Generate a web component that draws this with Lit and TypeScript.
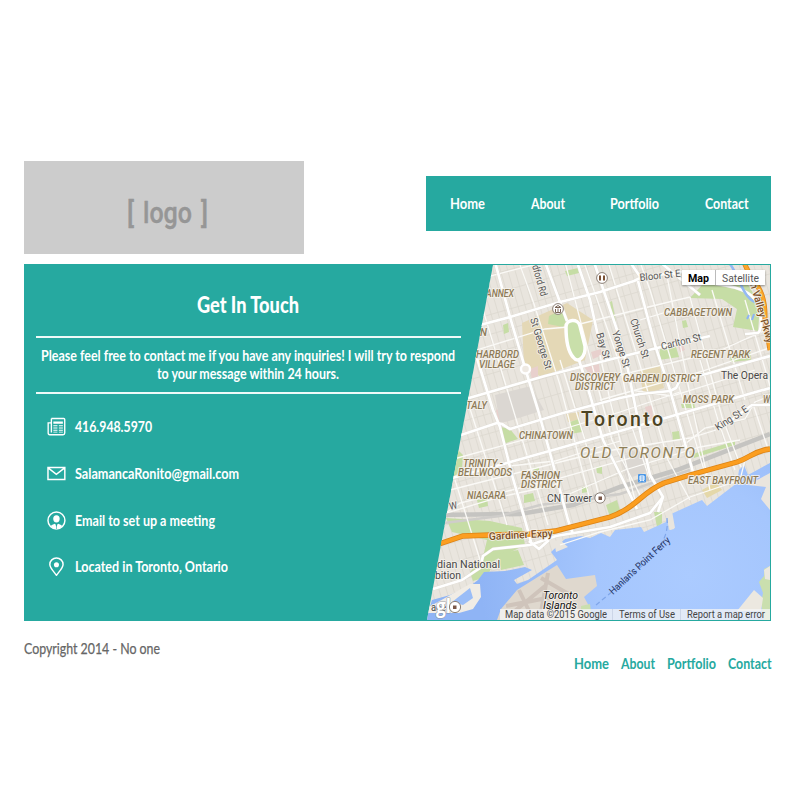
import { LitElement, html, svg, css } from "lit";
import { customElement } from "lit/decorators.js";

const fit = (text: string, w: number, h: number, base: number, cls = "") => html`
  <svg class="fit ${cls}" width=${w} height=${h} role="text">
    <text x="0" y=${base} textLength=${w} lengthAdjust="spacingAndGlyphs">${text}</text>
  </svg>`;

type Label = [text: string, x: number, y: number, w: number, cls: string, rot?: number];

const LABELS: Label[] = [
  ["ANNEX", 486, 297, 28, "area"],
  ["N", 480, 336, 7, "area"],
  ["HARBORD", 476, 358, 43, "area"],
  ["VILLAGE", 479, 368, 36, "area"],
  ["TALY", 466, 409, 21, "area"],
  ["DISCOVERY", 570, 381, 50, "area"],
  ["DISTRICT", 575, 390, 40, "area"],
  ["GARDEN DISTRICT", 623, 382, 78, "area"],
  ["CABBAGETOWN", 664, 316, 68, "area"],
  ["REGENT PARK", 691, 358, 59, "area"],
  ["MOSS PARK", 683, 403, 51, "area"],
  ["W", 763, 403, 7, "area"],
  ["CHINATOWN", 519, 439, 54, "area"],
  ["TRINITY -", 463, 467, 40, "area"],
  ["BELLWOODS", 458, 476, 54, "area"],
  ["FASHION", 521, 479, 39, "area"],
  ["DISTRICT", 521, 488, 41, "area"],
  ["NIAGARA", 467, 499, 39, "area"],
  ["EAST BAYFRONT", 688, 484, 70, "area"],
  ["OLD TORONTO", 580, 458, 115, "old"],
  ["Toronto", 581, 426, 82, "city"],
  ["The Opera", 721, 379, 47, "place"],
  ["CN Tower", 547, 502, 45, "place"],
  ["dian National", 437, 568, 63, "place"],
  ["bition", 435, 579, 26, "place"],
  ["ace", 431, 611, 15, "place"],
  ["Toronto", 543, 599, 35, "isle"],
  ["Islands", 543, 609, 34, "isle"],
  ["dford Rd", 532, 266, 32, "road", 74],
  ["St George St", 530, 319, 53, "road", 73],
  ["Bay St", 596, 334, 27, "road", 73],
  ["Yonge St", 612, 332, 38, "road", 72],
  ["Church St", 630, 320, 41, "road", 72],
  ["Carlton St", 662, 350, 41, "road", -14],
  ["Bloor St E", 640, 281, 41, "road", -6],
  ["King St E", 718, 431, 37, "road", -33],
  ["W", 450, 510, 8, "road", -12],
  ["Gardiner Expy", 489, 540, 64, "hwy", -3],
  ["n Valley Pkwy", 750, 284, 62, "hwy", 74],
  ["Hanlan's Point Ferry", 613, 595, 79, "ferry", -43],
];

const MINOR = [
  "M477 282L490 276L600 248", "M470 352L545 329L568 327L640 309L690 297", "M480 300L520 432L548 525", "M520 265L534 304L560 385L590 500",
  "M565 262L596 380L612 440L640 495", "M640 262L650 290L668 350L707 480", "M667 276L693 410L710 490", "M640 320L680 308L700 311",
  "M690 297L722 417L741 467", "M712 290L745 400", "M745 300L774 400", "M753 404L768 449", "M450 460L560 430L620 412L680 392",
  "M620 375L717 352L770 328", "M630 390L672 396L755 370", "M450 490L560 462L600 452L690 438L716 430", "M510 466L555 461L590 450L620 441",
  "M560 498L625 470L700 447L740 440", "M436 520L460 503L560 478L630 458", "M455 480L480 560", "M464 390L480 440L507 525",
  "M440 515L500 497L560 484", "M585 265L620 365L633 430L650 480", "M609 265L640 365L668 460L690 500", "M560 545L600 532L650 520L690 497L740 480L745 460",
  "M600 355L610 400L635 500", "M700 360L718 420L735 470", "M600 400L700 372L772 347", "M560 360L585 440L600 500", "M680 448L705 428L745 419L755 402L770 396",
];

const MAJOR = [
  "M465 329L510 317L560 302L600 292L634 281L642 277L681 272L710 275",
  "M495 262L510 317L525 368L538 410L550 453L568 520L573 534",
  "M473 345L493 410L500 427L512 475L525 520L531 542",
  "M545 262L567 321M579 360L590 395L603 440L622 478L637 509",
  "M577 262L590 300L600 345M594 262L617 330L628 370L640 430L650 475L663 497L658 512",
  "M638 281L655 345L670 390L693 472",
  "M630 262L641 278M660 262L700 295",
  "M462 400L545 376L620 357L657 348L710 336",
  "M455 437L497 423L502 424L510 429L563 413L620 398L640 394L670 391L676 388L680 380L706 374L770 356",
  "M445 480L507 463L553 450L620 431L700 408L770 388",
  "M718 430L752 405L772 405",
  "M433 589L462 580L480 568L483 556L493 549L530 545L556 536L610 527L650 513L663 497",
  "M700 281C722 285 740 286 752 296C762 306 763 330 758 333L745 334",
  "M529 541L539 549L549 540",
];

const GARDINER = "M436 545L463 536L490 535L530 534L555 531L610 517C636 508 642 492 664 483L690 475L737 462C750 458 753 451 770 449";

@customElement("city-map")
export class CityMap extends LitElement {
  static styles = css`
    :host { display: block; position: relative; width: 343px; height: 355px;
      clip-path: polygon(66px 0, 100% 0, 100% 100%, 0 100%); font-family: Roboto, sans-serif; }
    .art { display: block; }
    .art text { paint-order: stroke; stroke: #f5f2ec; stroke-width: 2px; stroke-linejoin: round; stroke-opacity: .85; }
    .minor { fill: none; stroke: #fbfaf7; stroke-width: 1.3; }
    .major { fill: none; stroke: #fff; stroke-width: 2.7; stroke-linejoin: round; }
    .edge { fill: none; stroke: #dedad2; stroke-width: 3.3; stroke-linejoin: round; }
    .area { font: italic 500 10px Roboto, sans-serif; fill: #8d7a56; }
    .old { font: italic 400 15.5px Roboto, sans-serif; fill: #8f8059; }
    .city { font: 500 19.5px Roboto, sans-serif; fill: #4c4322; }
    .place { font: 10.5px Roboto, sans-serif; fill: #484848; }
    .isle { font: italic 400 11px Roboto, sans-serif; fill: #111; }
    .road { font: 10.3px Roboto, sans-serif; fill: #555; }
    .hwy { font: 500 10.5px Roboto, sans-serif; fill: #7c4f24; }
    .art .ferry { font: 10px Roboto, sans-serif; fill: #223060; stroke: none; }
    .art .brand { font: 700 19px "Open Sans", sans-serif; fill: #fff; stroke: #8c9199; stroke-width: 1.2px; }
    .switch { position: absolute; top: 5px; right: 5px; display: flex; height: 15px; background: #fff;
      box-shadow: 0 1px 2px rgba(0,0,0,.4); color: #565656; }
    .opt { display: flex; align-items: center; justify-content: center; box-sizing: border-box; width: 49px; }
    .opt.on { width: 34px; padding-right: 1px; border-right: 1px solid #bbb; color: #000; }
    .fit { display: block; overflow: visible; fill: currentColor; font: 10.5px Roboto, sans-serif; }
    .fit.b { font-weight: 700; }
    .credits { position: absolute; right: 0; bottom: 0; display: flex; height: 11px; color: #444; }
    .credit { background: rgba(245,245,245,.76); padding: 0 5px 0 6px; border-left: 1px solid rgba(190,200,220,.6); }
    .credit:first-child { border-left: 0; padding-left: 5px; }
  `;

  private label([t, x, y, w, cls, rot]: Label) {
    return svg`<text class=${cls} x=${x} y=${y} textLength=${w}
      lengthAdjust=${cls === "city" || cls === "old" ? "spacing" : "spacingAndGlyphs"}
      transform=${rot ? `rotate(${rot} ${x} ${y})` : "rotate(0)"}>${t}</text>`;
  }

  render() {
    return html`
      <svg class="art" width="343" height="355" viewBox="427 265 343 355">
        <defs>
          <pattern id="blocks" width="14" height="19" patternUnits="userSpaceOnUse" patternTransform="rotate(-16)">
            <path d="M0 .5H14M.5 0V19M7.5 0V19" stroke="#dcd8cf" stroke-width=".8" fill="none" />
          </pattern>
          <radialGradient id="lake" gradientUnits="userSpaceOnUse" cx="690" cy="575" r="210">
            <stop offset="0" stop-color="#abcbff" /><stop offset=".45" stop-color="#a5c6fd" /><stop offset="1" stop-color="#8fb4f5" />
          </radialGradient>
        </defs>
        <rect x="427" y="265" width="343" height="355" fill="#e9e5de" />
        <rect x="427" y="265" width="343" height="355" fill="url(#blocks)" />
        <g fill="#e4d8b6">
          <path d="M522 323L567 303L593 320L585 360L541 377L524 365Z" />
          <path d="M640 370L660 366L664 388L643 395Z" /><path d="M566 414L579 412L579 420L568 422Z" />
        </g>
        <g fill="#e8d0cd">
          <path d="M530 369L538 366L538 378L532 380Z" /><path d="M591 352L601 349L602 355L593 359Z" /><path d="M584 367L599 364L600 374L590 374Z" />
          <path d="M496 410L504 407L507 421L499 423Z" /><path d="M645 407L652 405L653 418L648 420Z" /><path d="M678 346L683 345L685 350L680 352Z" />
        </g>
        <path fill="#dbd7d2" d="M495 395L531 386L544 410L509 421L500 423ZM620 457L640 450L652 470L627 479Z" />
        <g fill="#c6dda5">
          <path d="M690 298L703 284L743 276L760 305L758 331L733 327L737 309L722 299Z" />
          <path d="M660 349L676 347L679 357L659 360Z" /><path d="M501 427L510 429L518 439L503 444Z" />
          <path d="M570 422L579 419L582 432L570 434Z" /><path d="M565 271L578 268L579 273L567 276Z" />
          <path d="M549 316L561 310L567 320L563 327L548 324Z" /><path d="M503 325L508 323L509 332L504 334Z" />
          <path d="M612 301L616 322L613 320L610 302Z" /><path d="M672 432L679 431L680 439L673 440Z" />
          <path d="M693 454L735 441L735 445L694 458Z" /><path d="M458 450L463 455L462 469L453 478Z" />
          <path d="M477 500L487 497L488 506L479 508ZM524 495L533 493L535 501L524 503Z" />
          <path d="M533 468L539 467L539 472L534 473ZM596 467L602 466L602 474L597 473ZM582 487L588 487L588 492L582 493Z" />
          <path d="M682 321L686 320L688 327L683 328ZM681 404L694 402L695 408L682 408ZM730 357L750 350L751 360L731 362Z" />
          <path d="M446 518L490 521L522 528L525 545L495 560L487 577L473 581L470 572L483 557L487 540L452 532Z" />
          <path d="M498 554L518 550L524 565L501 570Z" />
          <path d="M606 505L617 500L621 514L610 517ZM654 512L662 512L662 523L657 527Z" />
        </g>
        <path d="M436 515L520 514L573 505L620 487L677 470L770 434" fill="none" stroke="#c5c4c1" stroke-width="4.5" />
        <path d="M436 524L500 516L540 505L620 494L690 470" fill="none" stroke="#cfcdca" stroke-width="2.5" />
        <path fill="url(#lake)" d="M425 622L432 600L450 595L470 586L478 580L484 572L505 571L525 567L532 570L514 580L517 584L528 580L557 560L551 552L565 539L581 536L590 538L601 533L610 537L615 530L641 527L644 532L666 522L667 517L669 530L674 529L671 514L702 500L707 506L737 483L739 470L744 465L748 475L770 463V622Z" />
        <path fill="#e9e5de" d="M748 485L759 479L770 473V510L761 499L766 487Z" />
        <path fill="#e5d8a9" d="M702 490L716 482L722 490L707 498Z" />
        <path fill="#e9e5de" d="M554 541L560 540L568 547L556 552ZM665 513L672 511L675 528L670 530Z" />
        <path fill="#f0ece5" d="M427 608L445 598L470 584L480 584L481 597L473 609L459 613L427 613Z" />
        <path fill="#9abdf7" d="M452 602L470 588L473 598L463 605Z" />
        <path fill="#dfd8ce" d="M497 620L501 609L517 590L557 565L566 579L595 575L597 586L584 597L590 608L588 620Z" />
        <path fill="none" stroke="#cfc4bb" stroke-width="4" d="M506 606L557 596M510 615L545 586M519 590L530 613M541 578L572 596M548 573L541 612" />
        <path fill="#cadfae" d="M581 606L590 604L591 612L581 611ZM759 582L764 576L764 569L770 566V620H764L761 603L763 593Z" />
        <path fill="#ece8e0" d="M737 611L754 590L763 598L761 611ZM764 570L770 566V580L765 579Z" />
        <path d="M667 518C670 545 650 560 596 605" fill="none" stroke="#7fa6ea" stroke-width="1.2" stroke-dasharray="5 3" />
        ${MINOR.map((d) => svg`<path class="minor" d=${d} />`)}
        ${MAJOR.map((d) => svg`<path class="edge" d=${d} />`)}
        ${MAJOR.map((d) => svg`<path class="major" d=${d} />`)}
        <path d="M566 327C566 319 578 318 580 326L585 346C586 355 579 365 573 357C567 350 566 338 566 327Z" fill="#c9dfaa" stroke="#fff" stroke-width="3.5" />
        <circle cx="525.5" cy="369" r="4.5" fill="#eee9e2" stroke="#fff" stroke-width="2.4" />
        <path d="M730 264C742 280 742 300 760 304" fill="none" stroke="#94b9f4" stroke-width="2.5" />
        <path d="M754 314L752 320M749 315L747 319" stroke="#8db3f5" stroke-width="2" />
        <path d="M744 262C752 285 766 285 765 320L770 350" fill="none" stroke="#dd8619" stroke-width="5" />
        <path d="M744 262C752 285 766 285 765 320L770 350" fill="none" stroke="#fba62c" stroke-width="3.4" />
        <path d=${GARDINER} fill="none" stroke="#dc8417" stroke-width="5.4" />
        <path d=${GARDINER} fill="none" stroke="#fb9e20" stroke-width="3.8" />
        ${LABELS.map((l) => this.label(l))}
        <text class="brand" x="436" y="613" textLength="15" lengthAdjust="spacingAndGlyphs">gl</text>
        <g stroke="#8d8178" stroke-width="1" fill="#fff">
          <circle cx="602" cy="278" r="5.4" /><circle cx="558" cy="309" r="5.4" /><circle cx="600" cy="498" r="5.2" /><circle cx="455" cy="607" r="5.6" />
        </g>
        <path d="M600 275.500V280.500M604 275.500V280.500" stroke="#7b5134" stroke-width="2" />
        <path d="M555 307.500L558 305.500L561 307.500ZM555.500 309V312.500H560.500V309M558 308.500V312" fill="none" stroke="#7b6658" stroke-width="1" />
        <path d="M598.500 496.500H602V500H598.500ZM453 605.500H456.500V609H453Z" fill="#7b5848" />
        <rect x="638" y="474" width="8" height="8.500" rx="1" fill="#4c98e7" />
        <path d="M640 476H644V480H640ZM640 478H644M640 481.500L641 480M644 481.500L643 480" fill="none" stroke="#fff" stroke-width="1" />
      </svg>
      <div class="switch">
        <span class="opt on">${fit("Map", 21, 13, 10.5, "b")}</span>
        <span class="opt">${fit("Satellite", 37, 13, 10.5)}</span>
      </div>
      <div class="credits">
        <span class="credit">${fit("Map data ©2015 Google", 102, 11, 9)}</span>
        <span class="credit">${fit("Terms of Use", 56, 11, 9)}</span>
        <span class="credit">${fit("Report a map error", 78, 11, 9)}</span>
      </div>`;
  }
}

const NAV: [string, number][] = [["Home", 35], ["About", 34], ["Portfolio", 49], ["Contact", 43.5]];

const ICONS = {
  news: svg`<path d="M4.500 1.500H17.200Q18.200 1.500 18.200 2.500V16.500Q18.200 18.200 16.500 18.200H2.800Q1.200 18.200 1.200 16.500V6H4M4.500 1.500V16" fill="none" stroke="#fff" stroke-width="1.4"/>
    <path d="M6.500 4.500H16.300V7H6.500ZM6.500 8.500H10.700V9.500H6.500ZM6.500 10.800H10.700V11.800H6.500ZM6.500 13H10.700V14H6.500ZM6.500 15.200H10.700V16H6.500ZM12.200 8.500H16.300V9.500H12.200ZM12.200 10.800H16.300V11.800H12.200ZM12.200 13H16.300V14H12.200ZM12.200 15.200H16.300V16H12.200Z" fill="#fff"/>`,
  mail: svg`<path d="M1 3.700H18.300V15.800H1ZM1.500 4.200L9.600 10.600L17.800 4.200" fill="none" stroke="#fff" stroke-width="1.5"/>`,
  user: svg`<circle cx="9.700" cy="9.700" r="8.700" fill="none" stroke="#fff" stroke-width="1.500"/>
    <ellipse cx="9.700" cy="8" rx="3.300" ry="3.700" fill="#fff"/><path d="M3.600 15.500Q5.300 14 8 13.200L9.700 15L11.400 13.200Q14.200 14 15.800 15.500Q13.500 18.500 9.700 18.600Q6 18.500 3.600 15.500Z" fill="#fff"/>
    <path d="M9.700 14L8.900 15L9.400 16V18.800H10V16L10.500 15Z" fill="#26a9a0"/>`,
  pin: svg`<path d="M9.700 18.700C6.500 14.400 2.900 11 2.900 7.600A6.800 6.600 0 0 1 16.500 7.600C16.500 11 12.900 14.400 9.700 18.700Z" fill="none" stroke="#fff" stroke-width="1.500"/><circle cx="9.700" cy="7.900" r="2.600" fill="#fff"/>`,
};

const ROWS: [unknown, string, number][] = [
  [ICONS.news, "416.948.5970", 77],
  [ICONS.mail, "SalamancaRonito@gmail.com", 164],
  [ICONS.user, "Email to set up a meeting", 140],
  [ICONS.pin, "Located in Toronto, Ontario", 153],
];

@customElement("app-root")
export class AppRoot extends LitElement {
  static styles = css`
    :host { display: block; box-sizing: border-box; width: 800px; height: 800px; padding: 161px 29px 0 24px; background: #fff;
      font-family: Lato, sans-serif; color: #fff; }
    .fit { display: block; overflow: visible; fill: currentColor; font: 700 15.5px Lato, sans-serif; }
    .fit.title { font-size: 22px; font-weight: 900; }
    .fit.copy { font-weight: 400; stroke: currentColor; stroke-width: .25px; }
    header { display: flex; justify-content: space-between; height: 93px; }
    .logo { width: 280px; height: 93px; background: #ccc; display: block; }
    .logo text { font: 500 29px Roboto, sans-serif; fill: #969696; stroke: #969696; stroke-width: .4px; }
    nav { display: flex; }
    .top { box-sizing: border-box; width: 345px; height: 55px; margin-top: 15px; padding: 18px 23px 0 24px; background: #26a9a0; justify-content: space-between; }
    a { color: inherit; text-decoration: none; }
    .panel { display: flex; justify-content: space-between; box-sizing: border-box; height: 357px; margin-top: 10px;
      border: 1px solid #26a9a0; background: #26a9a0; }
    .info { width: 425px; margin-left: 11px; margin-right: -40px; padding-top: 29px; }
    h1, p { margin: 0; display: flex; flex-direction: column; align-items: center; }
    h1 { height: 42px; padding-right: 2px; }
    p { box-sizing: border-box; height: 58px; padding: 9px 1px 0 0; border: solid #eefaf8; border-width: 2px 0; }
    ul { list-style: none; margin: 0; padding: 23px 0 0 11px; }
    li { display: flex; align-items: center; gap: 9px; height: 19px; margin-bottom: 27.800px; }
    footer { display: flex; justify-content: space-between; padding-top: 18px; color: #666; }
    .copyright { padding-top: 3px; }
    .bottom { gap: 12px; padding-top: 15px; color: #26a9a0; }
  `;

  private links(cls: string) {
    return html`<nav class=${cls}>${NAV.map(([t, w]) => html`<a href="#">${fit(t, w, 20, 15)}</a>`)}</nav>`;
  }

  render() {
    return html`
      <header>
        <svg class="logo" viewBox="0 0 280 93">
          <text y="61.500"><tspan x="103" textLength="7" lengthAdjust="spacingAndGlyphs">[</tspan><tspan
            x="119" textLength="49" lengthAdjust="spacingAndGlyphs">logo</tspan><tspan x="177" textLength="7" lengthAdjust="spacingAndGlyphs">]</tspan></text>
        </svg>
        ${this.links("top")}
      </header>
      <main class="panel">
        <section class="info">
          <h1>${fit("Get In Touch", 102, 24, 19, "title")}</h1>
          <p>
            ${fit("Please feel free to contact me if you have any inquiries! I will try to respond", 414, 18, 14)}
            ${fit("to your message within 24 hours.", 182, 18, 14)}
          </p>
          <ul>
            ${ROWS.map(([icon, t, w]) => html`<li><svg width="19" height="19" viewBox="0 0 19.500 19.500">${icon}</svg>${fit(t, w, 19, 15)}</li>`)}
          </ul>
        </section>
        <city-map></city-map>
      </main>
      <footer>
        <div class="copyright">${fit("Copyright 2014 - No one", 136, 20, 12, "copy")}</div>
        ${this.links("bottom")}
      </footer>`;
  }
}
